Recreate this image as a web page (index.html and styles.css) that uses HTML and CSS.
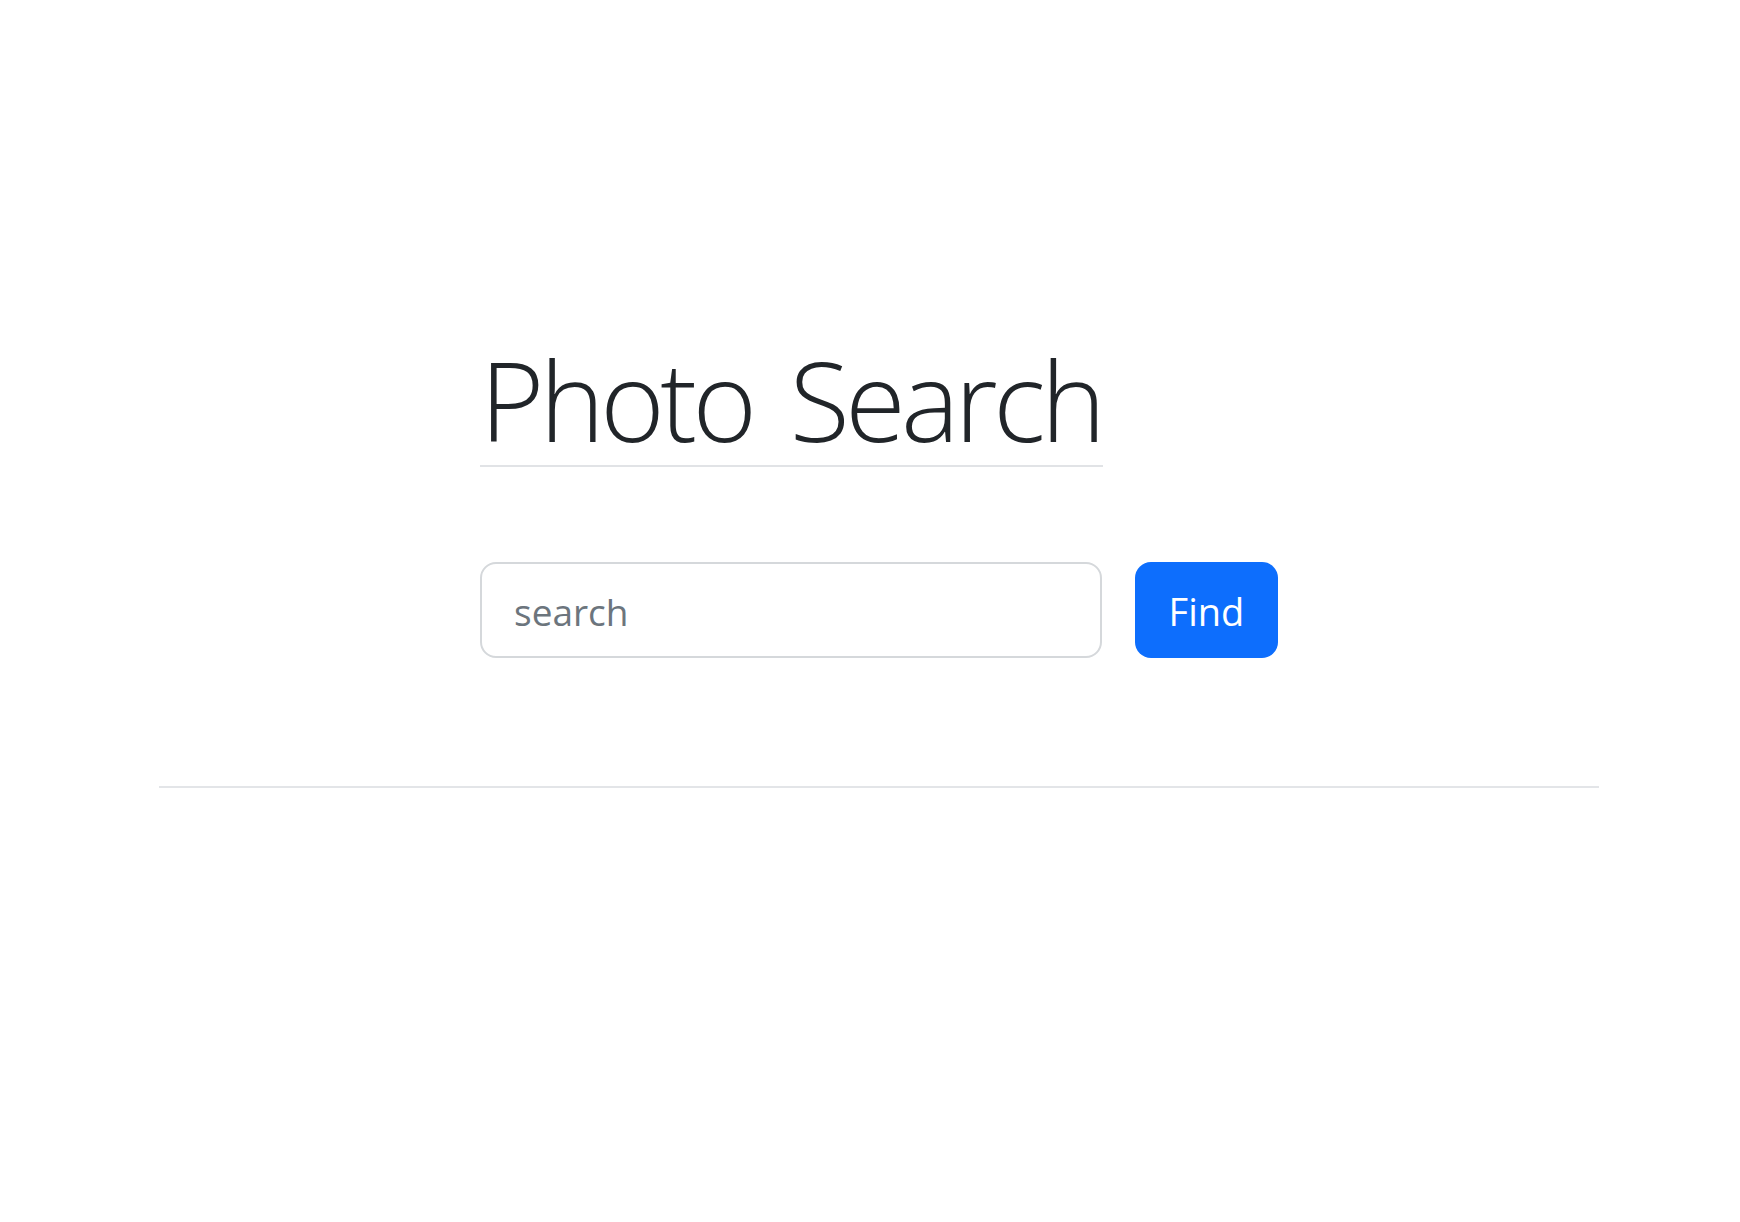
FILE: index.html
```html
<!DOCTYPE html>
<html lang="en">
<head>
<meta charset="utf-8">
<title>Photo Search</title>
<link rel="stylesheet" href="styles.css">
</head>
<body>
<div class="page">
  <section class="hero">
    <h1 class="title">Photo Search</h1>
    <form class="search-row">
      <input class="search-input" type="text" placeholder="search">
      <button class="find-btn" type="button">Find</button>
    </form>
  </section>
  <hr class="divider">
</div>
</body>
</html>
```
FILE: styles.css
```css
html, body {
  margin: 0;
  padding: 0;
  background: #ffffff;
}

body {
  font-family: "Open Sans", "Noto Sans", "Liberation Sans", sans-serif;
  color: #212529;
}

.page {
  width: 1440px;
  padding-left: 159px;
}

.hero {
  padding-left: 321px;
  padding-top: 334px;
}

.title {
  margin: 0;
  width: 623px;
  font-family: "Open Sans", "Noto Sans", sans-serif;
  font-weight: 300;
  font-size: 110px;
  line-height: 131px;
  letter-spacing: -4.5px;
  word-spacing: 13px;
  color: #212529;
  border-bottom: 2px solid #e1e3e6;
  white-space: nowrap;
}

.search-row {
  display: flex;
  gap: 33px;
  margin: 95px 0 0 0;
}

.search-input {
  box-sizing: border-box;
  width: 622px;
  height: 96px;
  padding: 17px 32px 15px;
  border: 2px solid #d5d8db;
  border-radius: 16px;
  font-family: "Open Sans", "Noto Sans", sans-serif;
  font-size: 37px;
  color: #212529;
  background: #ffffff;
  outline: none;
}

.search-input::placeholder {
  color: #6c757d;
}

.find-btn {
  box-sizing: border-box;
  width: 143px;
  height: 96px;
  padding: 2px 0 0 0;
  border: 0;
  border-radius: 16px;
  background: #0d6efd;
  color: #ffffff;
  font-family: "Open Sans", "Noto Sans", sans-serif;
  font-size: 38px;
  cursor: pointer;
}

.divider {
  margin: 128px 0 0 0;
  border: 0;
  height: 2px;
  background: #e3e5e8;
}
```
